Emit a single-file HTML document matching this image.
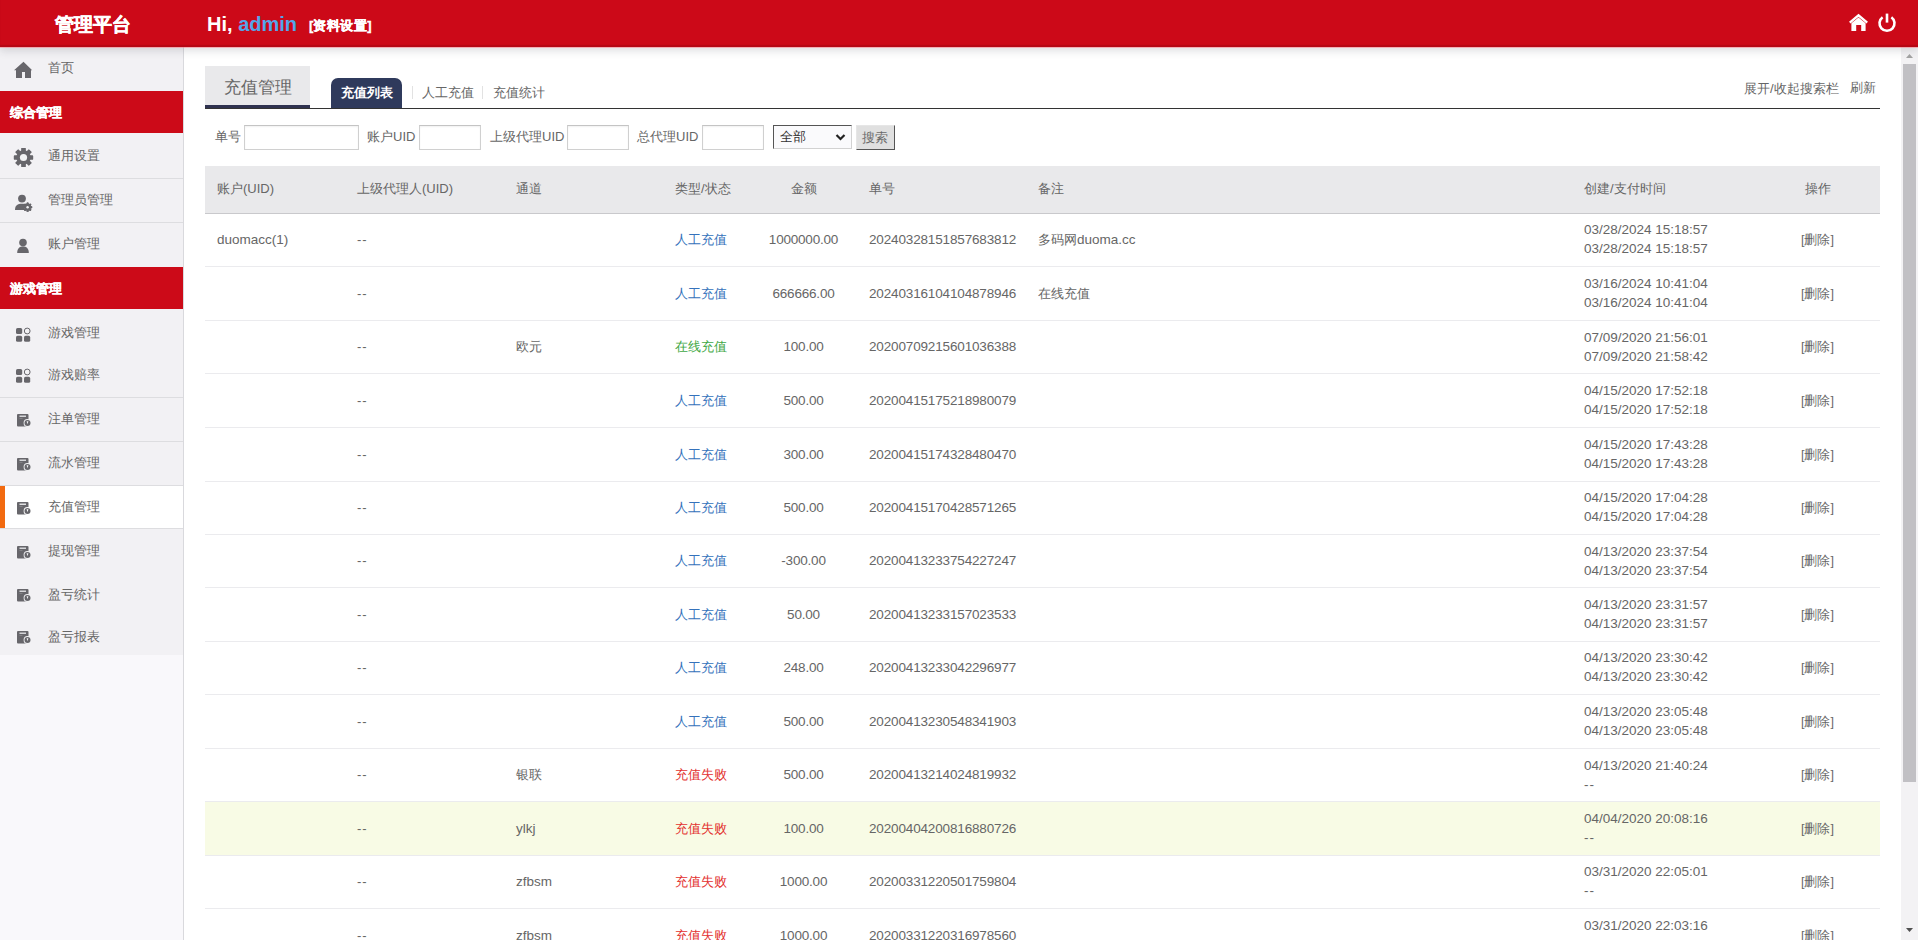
<!DOCTYPE html>
<html><head><meta charset="utf-8">
<style>
*{box-sizing:border-box;margin:0;padding:0}
html,body{width:1918px;height:940px;overflow:hidden;background:#fff;font-family:"Liberation Sans",sans-serif;font-size:13px;color:#555}
.a{position:absolute;white-space:nowrap}
.ic{position:absolute}
#hdr{position:absolute;left:0;top:0;width:1918px;height:47px;background:#cc0918;z-index:5;box-shadow:inset 0 -2px 1px rgba(90,0,10,.2),0 4px 8px rgba(40,50,60,.15)}
#pink{position:absolute;left:0;top:47px;width:1918px;height:1px;background:rgba(255,130,140,.55);z-index:6}
#side{position:absolute;left:0;top:47px;width:184px;height:608px;background:#f2f1f4;border-right:1px solid #d9d9dd}
#sidelow{position:absolute;left:0;top:655px;width:184px;height:285px;background:#f9f8fb;border-right:1px solid #d9d9dd}
.sep{position:absolute;left:0;width:183px;height:1px;background:#dddde0}
.red{position:absolute;left:0;width:183px;background:#cc0a18}
.rt{position:absolute;left:10px;line-height:20px;color:#fff;font-weight:700;font-size:13px;-webkit-text-stroke:0.35px #fff}
.it{position:absolute;left:48px;line-height:20px;color:#666;font-size:13px}
#sb{position:absolute;left:1901px;top:47px;width:17px;height:893px;background:#f3f2f4}
.row{position:absolute;left:205px;width:1675px;border-bottom:1px solid #ebebee}
.c{position:absolute;line-height:20px;white-space:nowrap;color:#666}
.cb{color:#3572bb}.cg{color:#3fa845}.cr{color:#e3312f}
.th{position:absolute;line-height:20px;white-space:nowrap;color:#666}
input.in{position:absolute;top:125px;height:25px;border:1px solid #d0d0d0;border-top-color:#c4c4c4;background:#fff;outline:none;box-shadow:inset 0 1px 2px rgba(0,0,0,.06)}
.lb{position:absolute;top:127px;line-height:20px;color:#666}
</style></head><body>

<div id="hdr">
  <div class="a" style="left:55px;top:13px;font-size:19px;line-height:24px;font-weight:700;color:#fff;-webkit-text-stroke:0.5px #fff">管理平台</div>
  <div class="a" style="left:207px;top:12px;font-size:20px;line-height:24px;font-weight:bold;color:#fff">Hi, <span style="color:#52a6ea">admin</span></div>
  <div class="a" style="left:309px;top:17px;font-size:13px;line-height:18px;font-weight:bold;color:#fff;-webkit-text-stroke:0.35px #fff">[<span style="letter-spacing:0.5px">资料设置</span>]</div>
  <svg class="ic" style="left:1848px;top:12px" width="22" height="21" viewBox="0 0 22 21"><path d="M1.8 10.6 L10.5 3.3 L19.2 10.6" fill="none" stroke="#fff" stroke-width="2.4" stroke-linejoin="miter"/><path d="M3.4 11.2 L10.5 5.6 L17.6 11.2 L17.6 19 L13.2 19 L13.2 13 L8.2 13 L8.2 19 L3.4 19 Z" fill="#fff"/></svg>
  <svg class="ic" style="left:1876px;top:11px" width="22" height="22" viewBox="0 0 22 22"><path d="M6.6 6.2 A7.5 7.5 0 1 0 15.4 6.2" fill="none" stroke="#fff" stroke-width="2.6"/><rect x="9.7" y="2.6" width="2.6" height="9" fill="#fff"/></svg>
</div>

<div id="pink"></div><div id="side"></div><div id="sidelow"></div>
<svg class="ic" style="left:13px;top:61px" width="20" height="18" viewBox="0 0 20 18"><path d="M1 9.3 L10.5 0.7 L19.2 9.3 L18 9.3 L18 17 L12 17 L12 11 L9 11 L9 17 L3 17 L3 9.3 Z" fill="#67666b"/></svg>
<div class="it" style="top:58px">首页</div>
<div class="red" style="top:91px;height:42px"></div><div class="rt" style="top:103px">综合管理</div>
<svg class="ic" style="left:13px;top:147px" width="21" height="21" viewBox="0 0 21 21"><rect x="8.40" y="0.90" width="4.20" height="19.20" rx="0.6" transform="rotate(0.0 10.50 10.50)" fill="#67666b"/><rect x="8.40" y="0.90" width="4.20" height="19.20" rx="0.6" transform="rotate(45.0 10.50 10.50)" fill="#67666b"/><rect x="8.40" y="0.90" width="4.20" height="19.20" rx="0.6" transform="rotate(90.0 10.50 10.50)" fill="#67666b"/><rect x="8.40" y="0.90" width="4.20" height="19.20" rx="0.6" transform="rotate(135.0 10.50 10.50)" fill="#67666b"/><rect x="8.40" y="0.90" width="4.20" height="19.20" rx="0.6" transform="rotate(180.0 10.50 10.50)" fill="#67666b"/><rect x="8.40" y="0.90" width="4.20" height="19.20" rx="0.6" transform="rotate(225.0 10.50 10.50)" fill="#67666b"/><rect x="8.40" y="0.90" width="4.20" height="19.20" rx="0.6" transform="rotate(270.0 10.50 10.50)" fill="#67666b"/><rect x="8.40" y="0.90" width="4.20" height="19.20" rx="0.6" transform="rotate(315.0 10.50 10.50)" fill="#67666b"/><circle cx="10.50" cy="10.50" r="7.20" fill="#67666b"/><circle cx="10.50" cy="10.50" r="3.60" fill="#f2f2f4"/></svg><div class="it" style="top:146px">通用设置</div>
<div class="sep" style="top:178px"></div>
<svg class="ic" style="left:13px;top:193px" width="21" height="20" viewBox="0 0 21 20"><circle cx="9" cy="5.6" r="3.9" fill="#67666b"/><path d="M2 17 C2 12.5 4.5 10.8 9 10.8 C11 10.8 12 11 12.5 11.3 L11 17 Z" fill="#67666b"/><rect x="13.60" y="9.60" width="2.00" height="9.20" rx="0.6" transform="rotate(0.0 14.60 14.20)" fill="#67666b"/><rect x="13.60" y="9.60" width="2.00" height="9.20" rx="0.6" transform="rotate(45.0 14.60 14.20)" fill="#67666b"/><rect x="13.60" y="9.60" width="2.00" height="9.20" rx="0.6" transform="rotate(90.0 14.60 14.20)" fill="#67666b"/><rect x="13.60" y="9.60" width="2.00" height="9.20" rx="0.6" transform="rotate(135.0 14.60 14.20)" fill="#67666b"/><rect x="13.60" y="9.60" width="2.00" height="9.20" rx="0.6" transform="rotate(180.0 14.60 14.20)" fill="#67666b"/><rect x="13.60" y="9.60" width="2.00" height="9.20" rx="0.6" transform="rotate(225.0 14.60 14.20)" fill="#67666b"/><rect x="13.60" y="9.60" width="2.00" height="9.20" rx="0.6" transform="rotate(270.0 14.60 14.20)" fill="#67666b"/><rect x="13.60" y="9.60" width="2.00" height="9.20" rx="0.6" transform="rotate(315.0 14.60 14.20)" fill="#67666b"/><circle cx="14.60" cy="14.20" r="3.40" fill="#67666b"/><circle cx="14.60" cy="14.20" r="1.20" fill="#f2f2f4"/></svg><div class="it" style="top:190px">管理员管理</div>
<div class="sep" style="top:222px"></div>
<svg class="ic" style="left:14px;top:237px" width="18" height="18" viewBox="0 0 18 18"><circle cx="9" cy="5.6" r="3.8" fill="#67666b"/><path d="M3.2 16 C3.2 11.5 5.5 9.6 9 9.6 C12.5 9.6 14.8 11.5 14.8 16 Z" fill="#67666b"/></svg><div class="it" style="top:234px">账户管理</div>
<div class="red" style="top:267px;height:42px"></div><div class="rt" style="top:279px">游戏管理</div>
<svg class="ic" style="left:15px;top:327px" width="17" height="16" viewBox="0 0 17 16"><rect x="1" y="1" width="6.2" height="6" rx="1.6" fill="#67666b"/><circle cx="12.2" cy="4" r="2.9" fill="none" stroke="#67666b" stroke-width="1"/><rect x="1" y="8.8" width="6.2" height="6" rx="1.6" fill="#67666b"/><rect x="9" y="8.8" width="6.2" height="6" rx="1.6" fill="#67666b"/></svg><div class="it" style="top:323px">游戏管理</div>
<svg class="ic" style="left:15px;top:368px" width="17" height="16" viewBox="0 0 17 16"><rect x="1" y="1" width="6.2" height="6" rx="1.6" fill="#67666b"/><circle cx="12.2" cy="4" r="2.9" fill="none" stroke="#67666b" stroke-width="1"/><rect x="1" y="8.8" width="6.2" height="6" rx="1.6" fill="#67666b"/><rect x="9" y="8.8" width="6.2" height="6" rx="1.6" fill="#67666b"/></svg><div class="it" style="top:365px">游戏赔率</div>
<div class="sep" style="top:397px"></div>
<svg class="ic" style="left:16px;top:413px" width="16" height="15" viewBox="0 0 16 15"><rect x="1" y="1" width="11.5" height="12.5" rx="1" fill="#67666b"/><rect x="3.5" y="2.6" width="6.5" height="1.2" fill="#f2f2f4"/><rect x="3.5" y="5.2" width="3" height="0.8" fill="#8a898d"/><circle cx="11.5" cy="10" r="3.9" fill="#f2f2f4"/><circle cx="11.5" cy="10" r="3.0" fill="#67666b"/><path d="M10.6 8.3 L12.4 8.3 L11.5 11.2 Z" fill="#f2f2f4"/></svg><div class="it" style="top:409px">注单管理</div>
<div class="sep" style="top:441px"></div>
<svg class="ic" style="left:16px;top:457px" width="16" height="15" viewBox="0 0 16 15"><rect x="1" y="1" width="11.5" height="12.5" rx="1" fill="#67666b"/><rect x="3.5" y="2.6" width="6.5" height="1.2" fill="#f2f2f4"/><rect x="3.5" y="5.2" width="3" height="0.8" fill="#8a898d"/><circle cx="11.5" cy="10" r="3.9" fill="#f2f2f4"/><circle cx="11.5" cy="10" r="3.0" fill="#67666b"/><path d="M10.6 8.3 L12.4 8.3 L11.5 11.2 Z" fill="#f2f2f4"/></svg><div class="it" style="top:453px">流水管理</div>
<div class="sep" style="top:485px"></div>
<div style="position:absolute;left:0;top:486px;width:183px;height:42px;background:#fff"></div><div style="position:absolute;left:0;top:486px;width:5px;height:42px;background:#f26a10"></div>
<svg class="ic" style="left:16px;top:501px" width="16" height="15" viewBox="0 0 16 15"><rect x="1" y="1" width="11.5" height="12.5" rx="1" fill="#67666b"/><rect x="3.5" y="2.6" width="6.5" height="1.2" fill="#ffffff"/><rect x="3.5" y="5.2" width="3" height="0.8" fill="#8a898d"/><circle cx="11.5" cy="10" r="3.9" fill="#ffffff"/><circle cx="11.5" cy="10" r="3.0" fill="#67666b"/><path d="M10.6 8.3 L12.4 8.3 L11.5 11.2 Z" fill="#ffffff"/></svg><div class="it" style="top:497px">充值管理</div>
<div class="sep" style="top:528px"></div>
<svg class="ic" style="left:16px;top:545px" width="16" height="15" viewBox="0 0 16 15"><rect x="1" y="1" width="11.5" height="12.5" rx="1" fill="#67666b"/><rect x="3.5" y="2.6" width="6.5" height="1.2" fill="#f2f2f4"/><rect x="3.5" y="5.2" width="3" height="0.8" fill="#8a898d"/><circle cx="11.5" cy="10" r="3.9" fill="#f2f2f4"/><circle cx="11.5" cy="10" r="3.0" fill="#67666b"/><path d="M10.6 8.3 L12.4 8.3 L11.5 11.2 Z" fill="#f2f2f4"/></svg><div class="it" style="top:541px">提现管理</div>
<svg class="ic" style="left:16px;top:588px" width="16" height="15" viewBox="0 0 16 15"><rect x="1" y="1" width="11.5" height="12.5" rx="1" fill="#67666b"/><rect x="3.5" y="2.6" width="6.5" height="1.2" fill="#f2f2f4"/><rect x="3.5" y="5.2" width="3" height="0.8" fill="#8a898d"/><circle cx="11.5" cy="10" r="3.9" fill="#f2f2f4"/><circle cx="11.5" cy="10" r="3.0" fill="#67666b"/><path d="M10.6 8.3 L12.4 8.3 L11.5 11.2 Z" fill="#f2f2f4"/></svg><div class="it" style="top:585px">盈亏统计</div>
<svg class="ic" style="left:16px;top:630px" width="16" height="15" viewBox="0 0 16 15"><rect x="1" y="1" width="11.5" height="12.5" rx="1" fill="#67666b"/><rect x="3.5" y="2.6" width="6.5" height="1.2" fill="#f2f2f4"/><rect x="3.5" y="5.2" width="3" height="0.8" fill="#8a898d"/><circle cx="11.5" cy="10" r="3.9" fill="#f2f2f4"/><circle cx="11.5" cy="10" r="3.0" fill="#67666b"/><path d="M10.6 8.3 L12.4 8.3 L11.5 11.2 Z" fill="#f2f2f4"/></svg><div class="it" style="top:627px">盈亏报表</div>
<div style="position:absolute;left:205px;top:66px;width:105px;height:42px;background:#e9e9eb;border-bottom:3px solid #2f3250"></div>
<div class="a" style="left:224px;top:77px;font-size:17px;line-height:22px;color:#666">充值管理</div>
<div style="position:absolute;left:331px;top:78px;width:71px;height:30px;background:#2f3a5c;border-radius:7px 7px 0 0"></div>
<div class="a" style="left:341px;top:83px;font-size:13px;line-height:20px;color:#fff;font-weight:bold">充值列表</div>
<div style="position:absolute;left:412px;top:86px;width:1px;height:13px;background:#e2e2e2"></div>
<div class="a" style="left:422px;top:83px;line-height:20px;color:#666">人工充值</div>
<div style="position:absolute;left:482px;top:86px;width:1px;height:13px;background:#e2e2e2"></div>
<div class="a" style="left:493px;top:83px;line-height:20px;color:#666">充值统计</div>
<div style="position:absolute;left:205px;top:108px;width:1675px;height:1px;background:#333"></div>
<div class="a" style="left:1744px;top:79px;line-height:20px;color:#666">展开/收起搜索栏</div>
<div class="a" style="left:1850px;top:78px;line-height:20px;color:#666">刷新</div>
<div class="lb" style="left:215px">单号</div><input class="in" style="left:244px;width:115px">
<div class="lb" style="left:367px">账户UID</div><input class="in" style="left:419px;width:62px">
<div class="lb" style="left:490px">上级代理UID</div><input class="in" style="left:567px;width:62px">
<div class="lb" style="left:637px">总代理UID</div><input class="in" style="left:702px;width:62px">
<div style="position:absolute;left:773px;top:125px;width:79px;height:24px;border:1px solid #d2d2d2;border-top-color:#555;border-left-color:#555;background:#fafafc"></div>
<div class="a" style="left:780px;top:127px;line-height:20px;color:#333">全部</div>
<svg class="ic" style="left:835px;top:133px" width="11" height="9" viewBox="0 0 11 9"><path d="M1.5 2 L5.5 6 L9.5 2" fill="none" stroke="#222" stroke-width="2.2"/></svg>
<div style="position:absolute;left:856px;top:125px;width:39px;height:25px;background:#e0e0e0;border:1px solid #e6e6e6;border-right-color:#555;border-bottom-color:#555"></div>
<div class="a" style="left:862px;top:128px;line-height:20px;color:#6a6a6a">搜索</div>
<div style="position:absolute;left:205px;top:166px;width:1675px;height:48px;background:#e9e9eb;border-bottom:1px solid #c9c9cc"></div>
<div class="th" style="left:217px;top:179px">账户(UID)</div>
<div class="th" style="left:357px;top:179px">上级代理人(UID)</div>
<div class="th" style="left:516px;top:179px">通道</div>
<div class="th" style="left:675px;top:179px">类型/状态</div>
<div class="th" style="left:791px;top:179px">金额</div>
<div class="th" style="left:869px;top:179px">单号</div>
<div class="th" style="left:1038px;top:179px">备注</div>
<div class="th" style="left:1584px;top:179px">创建/支付时间</div>
<div class="th" style="left:1805px;top:179px">操作</div>
<div class="row" style="top:214px;height:53px;"></div>
<div class="c" style="left:217px;top:230px;font-size:13.5px">duomacc(1)</div>
<div class="c" style="left:357px;top:230px;letter-spacing:1px">--</div>
<div class="c cb" style="left:675px;top:230px">人工充值</div>
<div class="c" style="left:743px;width:121px;text-align:center;top:230px;font-size:13.5px;letter-spacing:-0.2px">1000000.00</div>
<div class="c" style="left:869px;top:230px;font-size:13.5px;letter-spacing:-0.15px">20240328151857683812</div>
<div class="c" style="left:1038px;top:230px">多码网<span style="font-size:13.5px">duoma.cc</span></div>
<div class="c" style="left:1584px;top:220px;line-height:19px;font-size:13.5px">03/28/2024 15:18:57<br>03/28/2024 15:18:57</div>
<div class="c" style="left:1801px;top:230px;font-size:12.5px">[删除]</div>
<div class="row" style="top:267px;height:54px;"></div>
<div class="c" style="left:357px;top:284px;letter-spacing:1px">--</div>
<div class="c cb" style="left:675px;top:284px">人工充值</div>
<div class="c" style="left:743px;width:121px;text-align:center;top:284px;font-size:13.5px;letter-spacing:-0.2px">666666.00</div>
<div class="c" style="left:869px;top:284px;font-size:13.5px;letter-spacing:-0.15px">20240316104104878946</div>
<div class="c" style="left:1038px;top:284px">在线充值</div>
<div class="c" style="left:1584px;top:274px;line-height:19px;font-size:13.5px">03/16/2024 10:41:04<br>03/16/2024 10:41:04</div>
<div class="c" style="left:1801px;top:284px;font-size:12.5px">[删除]</div>
<div class="row" style="top:321px;height:53px;"></div>
<div class="c" style="left:357px;top:337px;letter-spacing:1px">--</div>
<div class="c" style="left:516px;top:337px;">欧元</div>
<div class="c cg" style="left:675px;top:337px">在线充值</div>
<div class="c" style="left:743px;width:121px;text-align:center;top:337px;font-size:13.5px;letter-spacing:-0.2px">100.00</div>
<div class="c" style="left:869px;top:337px;font-size:13.5px;letter-spacing:-0.15px">20200709215601036388</div>
<div class="c" style="left:1584px;top:328px;line-height:19px;font-size:13.5px">07/09/2020 21:56:01<br>07/09/2020 21:58:42</div>
<div class="c" style="left:1801px;top:337px;font-size:12.5px">[删除]</div>
<div class="row" style="top:374px;height:54px;"></div>
<div class="c" style="left:357px;top:391px;letter-spacing:1px">--</div>
<div class="c cb" style="left:675px;top:391px">人工充值</div>
<div class="c" style="left:743px;width:121px;text-align:center;top:391px;font-size:13.5px;letter-spacing:-0.2px">500.00</div>
<div class="c" style="left:869px;top:391px;font-size:13.5px;letter-spacing:-0.15px">20200415175218980079</div>
<div class="c" style="left:1584px;top:381px;line-height:19px;font-size:13.5px">04/15/2020 17:52:18<br>04/15/2020 17:52:18</div>
<div class="c" style="left:1801px;top:391px;font-size:12.5px">[删除]</div>
<div class="row" style="top:428px;height:54px;"></div>
<div class="c" style="left:357px;top:445px;letter-spacing:1px">--</div>
<div class="c cb" style="left:675px;top:445px">人工充值</div>
<div class="c" style="left:743px;width:121px;text-align:center;top:445px;font-size:13.5px;letter-spacing:-0.2px">300.00</div>
<div class="c" style="left:869px;top:445px;font-size:13.5px;letter-spacing:-0.15px">20200415174328480470</div>
<div class="c" style="left:1584px;top:435px;line-height:19px;font-size:13.5px">04/15/2020 17:43:28<br>04/15/2020 17:43:28</div>
<div class="c" style="left:1801px;top:445px;font-size:12.5px">[删除]</div>
<div class="row" style="top:482px;height:53px;"></div>
<div class="c" style="left:357px;top:498px;letter-spacing:1px">--</div>
<div class="c cb" style="left:675px;top:498px">人工充值</div>
<div class="c" style="left:743px;width:121px;text-align:center;top:498px;font-size:13.5px;letter-spacing:-0.2px">500.00</div>
<div class="c" style="left:869px;top:498px;font-size:13.5px;letter-spacing:-0.15px">20200415170428571265</div>
<div class="c" style="left:1584px;top:488px;line-height:19px;font-size:13.5px">04/15/2020 17:04:28<br>04/15/2020 17:04:28</div>
<div class="c" style="left:1801px;top:498px;font-size:12.5px">[删除]</div>
<div class="row" style="top:535px;height:53px;"></div>
<div class="c" style="left:357px;top:551px;letter-spacing:1px">--</div>
<div class="c cb" style="left:675px;top:551px">人工充值</div>
<div class="c" style="left:743px;width:121px;text-align:center;top:551px;font-size:13.5px;letter-spacing:-0.2px">-300.00</div>
<div class="c" style="left:869px;top:551px;font-size:13.5px;letter-spacing:-0.15px">20200413233754227247</div>
<div class="c" style="left:1584px;top:542px;line-height:19px;font-size:13.5px">04/13/2020 23:37:54<br>04/13/2020 23:37:54</div>
<div class="c" style="left:1801px;top:551px;font-size:12.5px">[删除]</div>
<div class="row" style="top:588px;height:54px;"></div>
<div class="c" style="left:357px;top:605px;letter-spacing:1px">--</div>
<div class="c cb" style="left:675px;top:605px">人工充值</div>
<div class="c" style="left:743px;width:121px;text-align:center;top:605px;font-size:13.5px;letter-spacing:-0.2px">50.00</div>
<div class="c" style="left:869px;top:605px;font-size:13.5px;letter-spacing:-0.15px">20200413233157023533</div>
<div class="c" style="left:1584px;top:595px;line-height:19px;font-size:13.5px">04/13/2020 23:31:57<br>04/13/2020 23:31:57</div>
<div class="c" style="left:1801px;top:605px;font-size:12.5px">[删除]</div>
<div class="row" style="top:642px;height:53px;"></div>
<div class="c" style="left:357px;top:658px;letter-spacing:1px">--</div>
<div class="c cb" style="left:675px;top:658px">人工充值</div>
<div class="c" style="left:743px;width:121px;text-align:center;top:658px;font-size:13.5px;letter-spacing:-0.2px">248.00</div>
<div class="c" style="left:869px;top:658px;font-size:13.5px;letter-spacing:-0.15px">20200413233042296977</div>
<div class="c" style="left:1584px;top:648px;line-height:19px;font-size:13.5px">04/13/2020 23:30:42<br>04/13/2020 23:30:42</div>
<div class="c" style="left:1801px;top:658px;font-size:12.5px">[删除]</div>
<div class="row" style="top:695px;height:54px;"></div>
<div class="c" style="left:357px;top:712px;letter-spacing:1px">--</div>
<div class="c cb" style="left:675px;top:712px">人工充值</div>
<div class="c" style="left:743px;width:121px;text-align:center;top:712px;font-size:13.5px;letter-spacing:-0.2px">500.00</div>
<div class="c" style="left:869px;top:712px;font-size:13.5px;letter-spacing:-0.15px">20200413230548341903</div>
<div class="c" style="left:1584px;top:702px;line-height:19px;font-size:13.5px">04/13/2020 23:05:48<br>04/13/2020 23:05:48</div>
<div class="c" style="left:1801px;top:712px;font-size:12.5px">[删除]</div>
<div class="row" style="top:749px;height:53px;"></div>
<div class="c" style="left:357px;top:765px;letter-spacing:1px">--</div>
<div class="c" style="left:516px;top:765px;">银联</div>
<div class="c cr" style="left:675px;top:765px">充值失败</div>
<div class="c" style="left:743px;width:121px;text-align:center;top:765px;font-size:13.5px;letter-spacing:-0.2px">500.00</div>
<div class="c" style="left:869px;top:765px;font-size:13.5px;letter-spacing:-0.15px">20200413214024819932</div>
<div class="c" style="left:1584px;top:756px;line-height:19px;font-size:13.5px">04/13/2020 21:40:24<br><span style="letter-spacing:1px">--</span></div>
<div class="c" style="left:1801px;top:765px;font-size:12.5px">[删除]</div>
<div class="row" style="top:802px;height:54px;background:#f8fbe5;"></div>
<div class="c" style="left:357px;top:819px;letter-spacing:1px">--</div>
<div class="c" style="left:516px;top:819px;font-size:13.5px">ylkj</div>
<div class="c cr" style="left:675px;top:819px">充值失败</div>
<div class="c" style="left:743px;width:121px;text-align:center;top:819px;font-size:13.5px;letter-spacing:-0.2px">100.00</div>
<div class="c" style="left:869px;top:819px;font-size:13.5px;letter-spacing:-0.15px">20200404200816880726</div>
<div class="c" style="left:1584px;top:809px;line-height:19px;font-size:13.5px">04/04/2020 20:08:16<br><span style="letter-spacing:1px">--</span></div>
<div class="c" style="left:1801px;top:819px;font-size:12.5px">[删除]</div>
<div class="row" style="top:856px;height:53px;"></div>
<div class="c" style="left:357px;top:872px;letter-spacing:1px">--</div>
<div class="c" style="left:516px;top:872px;font-size:13.5px">zfbsm</div>
<div class="c cr" style="left:675px;top:872px">充值失败</div>
<div class="c" style="left:743px;width:121px;text-align:center;top:872px;font-size:13.5px;letter-spacing:-0.2px">1000.00</div>
<div class="c" style="left:869px;top:872px;font-size:13.5px;letter-spacing:-0.15px">20200331220501759804</div>
<div class="c" style="left:1584px;top:862px;line-height:19px;font-size:13.5px">03/31/2020 22:05:01<br><span style="letter-spacing:1px">--</span></div>
<div class="c" style="left:1801px;top:872px;font-size:12.5px">[删除]</div>
<div class="row" style="top:909px;height:54px;"></div>
<div class="c" style="left:357px;top:926px;letter-spacing:1px">--</div>
<div class="c" style="left:516px;top:926px;font-size:13.5px">zfbsm</div>
<div class="c cr" style="left:675px;top:926px">充值失败</div>
<div class="c" style="left:743px;width:121px;text-align:center;top:926px;font-size:13.5px;letter-spacing:-0.2px">1000.00</div>
<div class="c" style="left:869px;top:926px;font-size:13.5px;letter-spacing:-0.15px">20200331220316978560</div>
<div class="c" style="left:1584px;top:916px;line-height:19px;font-size:13.5px">03/31/2020 22:03:16<br><span style="letter-spacing:1px">--</span></div>
<div class="c" style="left:1801px;top:926px;font-size:12.5px">[删除]</div>
<div id="sb"></div>
<svg class="ic" style="left:1901px;top:47px" width="17" height="17" viewBox="0 0 17 17"><path d="M5 11 L12 11 L8.5 7 Z" fill="#a3a3a3"/></svg>
<div style="position:absolute;left:1903px;top:64px;width:13px;height:718px;background:#c1c0c4"></div>
<svg class="ic" style="left:1901px;top:923px" width="17" height="17" viewBox="0 0 17 17"><path d="M5 5 L12 5 L8.5 9 Z" fill="#505050"/></svg>
</body></html>
